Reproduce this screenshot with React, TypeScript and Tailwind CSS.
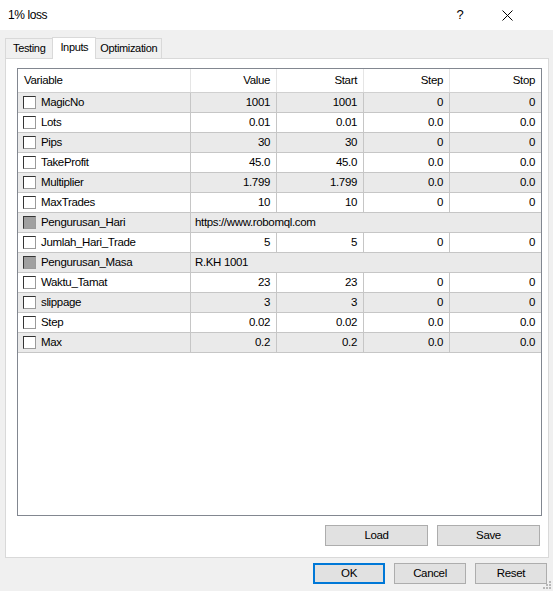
import React from "react";

type Row = {
  name: string;
  value: string;
  start?: string;
  step?: string;
  stop?: string;
  locked?: boolean;
};

const rows: Row[] = [
  { name: "MagicNo", value: "1001", start: "1001", step: "0", stop: "0" },
  { name: "Lots", value: "0.01", start: "0.01", step: "0.0", stop: "0.0" },
  { name: "Pips", value: "30", start: "30", step: "0", stop: "0" },
  { name: "TakeProfit", value: "45.0", start: "45.0", step: "0.0", stop: "0.0" },
  { name: "Multiplier", value: "1.799", start: "1.799", step: "0.0", stop: "0.0" },
  { name: "MaxTrades", value: "10", start: "10", step: "0", stop: "0" },
  { name: "Pengurusan_Hari", value: "https://www.robomql.com", locked: true },
  { name: "Jumlah_Hari_Trade", value: "5", start: "5", step: "0", stop: "0" },
  { name: "Pengurusan_Masa", value: "R.KH 1001", locked: true },
  { name: "Waktu_Tamat", value: "23", start: "23", step: "0", stop: "0" },
  { name: "slippage", value: "3", start: "3", step: "0", stop: "0" },
  { name: "Step", value: "0.02", start: "0.02", step: "0.0", stop: "0.0" },
  { name: "Max", value: "0.2", start: "0.2", step: "0.0", stop: "0.0" },
];

const cols = "grid grid-cols-[173px_86px_87px_86px_1fr]";

function Checkbox({ locked }: { locked?: boolean }) {
  return (
    <span
      className={
        "block w-[13px] h-[13px] shrink-0 border border-t-[#333] border-l-[#333] border-r-[#9a9a9a] border-b-[#9a9a9a] " +
        (locked ? "bg-[#a0a0a0]" : "bg-white")
      }
    />
  );
}

function Button({ label, primary, w = "w-[72px]" }: { label: string; primary?: boolean; w?: string }) {
  return (
    <button
      className={
        w +
        " h-[21px] bg-[#e1e1e1] text-black flex items-center justify-center " +
        (primary ? "border-2 border-[#0078d7]" : "border border-[#adadad]")
      }
    >
      {label}
    </button>
  );
}

export default function App() {
  return (
    <div
      className="relative w-[553px] h-[591px] bg-[#f0f0f0] flex flex-col text-[11.5px] tracking-[-0.35px] text-black overflow-hidden"
      style={{ fontFamily: '"Liberation Sans", Arial, sans-serif' }}
    >
      {/* title bar */}
      <div className="h-[30px] bg-white flex items-center shrink-0">
        <span className="pl-[8px] text-[12px] tracking-[-0.4px] flex-1">1% loss</span>
        <span className="text-[13px] w-[20px] text-center mr-[32px]">?</span>
        <svg width="11" height="11" viewBox="0 0 11 11" className="mr-[40px]">
          <path d="M0.5 0.5 L10.5 10.5 M10.5 0.5 L0.5 10.5" stroke="#000" strokeWidth="1" />
        </svg>
      </div>

      {/* tabs */}
      <div className="flex items-end h-[28px] pl-[5px] shrink-0 text-[11px]">
        <div className="h-[20px] px-[7px] flex items-center border border-b-0 border-[#d9d9d9] bg-[#f0f0f0]">
          Testing
        </div>
        <div className="h-[22px] px-[7px] pb-[3px] flex items-center border border-b-0 border-[#d9d9d9] bg-white -ml-px -mb-px relative z-10">
          Inputs
        </div>
        <div className="h-[20px] px-[4px] flex items-center border border-b-0 border-l-0 border-[#d9d9d9] bg-[#f0f0f0]">
          Optimization
        </div>
      </div>

      {/* tab panel */}
      <div className="ml-[5px] mr-[4px] h-[500px] bg-white border border-[#d9d9d9] pt-[9px] pl-[11px] pr-[6px] flex flex-col shrink-0">
        <div className="h-[448px] border border-[#828790] flex flex-col">
          {/* header */}
          <div className={cols + " h-[24px] border-b border-[#d0d0d0]"}>
            <div className="flex items-center pl-[6px] border-r border-[#e5e5e5]">Variable</div>
            <div className="flex items-center justify-end pr-[6px] border-r border-[#e5e5e5]">Value</div>
            <div className="flex items-center justify-end pr-[6px] border-r border-[#e5e5e5]">Start</div>
            <div className="flex items-center justify-end pr-[6px] border-r border-[#e5e5e5]">Step</div>
            <div className="flex items-center justify-end pr-[6px]">Stop</div>
          </div>
          {rows.map((r, i) => (
            <div
              key={r.name}
              className={cols + " h-[20px] border-b border-[#c6c6c6] " + (i % 2 === 0 ? "bg-[#eaeaea]" : "bg-white")}
            >
              <div className="flex items-center gap-[5px] pl-[5px] border-r border-[#c6c6c6]">
                <Checkbox locked={r.locked} />
                <span>{r.name}</span>
              </div>
              {r.locked ? (
                <div className="col-span-4 flex items-center pl-[4px]">{r.value}</div>
              ) : (
                <>
                  <div className="flex items-center justify-end pr-[6px] border-r border-[#c6c6c6]">{r.value}</div>
                  <div className="flex items-center justify-end pr-[6px] border-r border-[#c6c6c6]">{r.start}</div>
                  <div className="flex items-center justify-end pr-[6px] border-r border-[#c6c6c6]">{r.step}</div>
                  <div className="flex items-center justify-end pr-[6px]">{r.stop}</div>
                </>
              )}
            </div>
          ))}
        </div>
        <div className="flex justify-end gap-[9px] mt-[9px] pr-[2px]">
          <Button label="Load" w="w-[103px]" />
          <Button label="Save" w="w-[103px]" />
        </div>
      </div>

      {/* dialog buttons */}
      <div className="flex justify-end gap-[9px] mt-[5px] pr-[6px]">
        <Button label="OK" primary />
        <Button label="Cancel" />
        <Button label="Reset" />
      </div>

      {/* size grip */}
      <svg width="10" height="10" viewBox="0 0 10 10" className="absolute right-[1px] bottom-[1px]">
        <rect x="7" y="1" width="2" height="2" fill="#b8b8b8" />
        <rect x="4" y="4" width="2" height="2" fill="#b8b8b8" />
        <rect x="7" y="4" width="2" height="2" fill="#b8b8b8" />
        <rect x="1" y="7" width="2" height="2" fill="#b8b8b8" />
        <rect x="4" y="7" width="2" height="2" fill="#b8b8b8" />
        <rect x="7" y="7" width="2" height="2" fill="#b8b8b8" />
      </svg>
    </div>
  );
}
